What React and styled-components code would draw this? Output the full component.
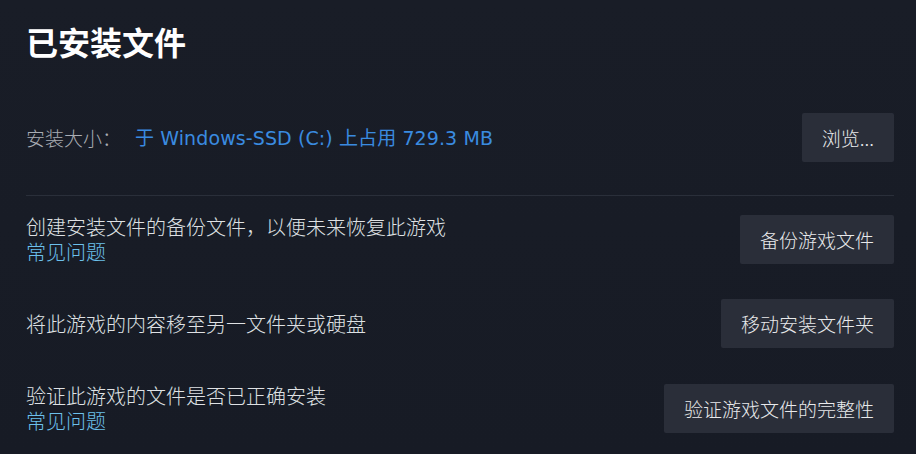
import React from "react";
import styled, { createGlobalStyle } from "styled-components";

const Global = createGlobalStyle`
  html, body { margin: 0; padding: 0; background: #181c26; }
  body { font-family: "Noto Sans", "Noto Sans CJK SC", sans-serif; }
  * { box-sizing: border-box; }
`;

const Page = styled.div`
  width: 916px;
  height: 454px;
  overflow: hidden;
  padding: 23px 22px 0 26px;
  background: linear-gradient(180deg, #191d27 0%, #171b25 100%);
  display: flex;
  flex-direction: column;
`;

const Title = styled.h1`
  margin: 0;
  font-family: "Noto Sans CJK SC", sans-serif;
  font-size: 32px;
  line-height: 36px;
  font-weight: 700;
  color: #ffffff;
`;

const SizeRow = styled.div`
  margin-top: 54px;
  display: flex;
  align-items: center;
  justify-content: space-between;
`;

const SizeText = styled.div`
  display: flex;
  align-items: center;
  gap: 14px;
  font-size: 19px;
  line-height: 24px;
`;

const Label = styled.span`
  color: #a9adb4;
  font-family: "Noto Sans CJK SC", sans-serif;
  font-weight: 300;
`;

const Value = styled.span`
  color: #3a8be0;
  font-family: "DejaVu Sans", "Noto Sans CJK SC", sans-serif;
  font-weight: 400;
  letter-spacing: 0.1px;
`;

const Divider = styled.div`
  margin-top: 33px;
  height: 1px;
  background: #2a2f3a;
`;

const Rows = styled.div`
  margin-top: 18px;
  display: flex;
  flex-direction: column;
  gap: 35px;
`;

const Row = styled.div`
  display: flex;
  align-items: center;
  justify-content: space-between;
`;

const Info = styled.div`
  display: flex;
  flex-direction: column;
  font-family: "Noto Sans CJK SC", sans-serif;
  font-size: 20px;
  line-height: 25px;
`;

const Desc = styled.span`
  color: #dfe1e4;
  font-weight: 300;
`;

const Faq = styled.a`
  color: #6cc0ec;
  text-decoration: none;
  cursor: pointer;
  font-weight: 300;
`;

const Button = styled.button`
  height: 49px;
  padding: 0 20px;
  border: none;
  border-radius: 2px;
  background: #2a2e39;
  color: #e8e9eb;
  font-family: "Noto Sans CJK SC", sans-serif;
  font-size: 19px;
  font-weight: 300;
  white-space: nowrap;
  cursor: pointer;
`;

const rows = [
  { desc: "创建安装文件的备份文件，以便未来恢复此游戏", faq: true, btn: "备份游戏文件" },
  { desc: "将此游戏的内容移至另一文件夹或硬盘", faq: false, btn: "移动安装文件夹" },
  { desc: "验证此游戏的文件是否已正确安装", faq: true, btn: "验证游戏文件的完整性" },
];

export default function App() {
  return (
    <>
      <Global />
      <Page>
        <Title>已安装文件</Title>
        <SizeRow>
          <SizeText>
            <Label>安装大小：</Label>
            <Value>于 Windows-SSD (C:) 上占用 729.3 MB</Value>
          </SizeText>
          <Button>浏览...</Button>
        </SizeRow>
        <Divider />
        <Rows>
          {rows.map((r) => (
            <Row key={r.btn}>
              <Info>
                <Desc>{r.desc}</Desc>
                {r.faq && <Faq>常见问题</Faq>}
              </Info>
              <Button>{r.btn}</Button>
            </Row>
          ))}
        </Rows>
      </Page>
    </>
  );
}
